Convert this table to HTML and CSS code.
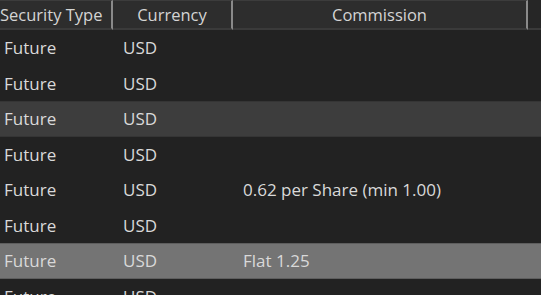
FILE: index.html
```html
<!DOCTYPE html>
<html>
<head>
<meta charset="utf-8">
<link rel="stylesheet" href="styles.css">
</head>
<body>
<div class="grid">
  <div class="header">
    <div class="hcell c1">Security Type</div>
    <div class="hcell c2">Currency</div>
    <div class="hcell c3">Commission</div>
    <div class="hfill"></div>
  </div>
  <div class="row"><div class="cell c1">Future</div><div class="cell c2">USD</div><div class="cell c3"></div></div>
  <div class="row"><div class="cell c1">Future</div><div class="cell c2">USD</div><div class="cell c3"></div></div>
  <div class="row hover"><div class="cell c1">Future</div><div class="cell c2">USD</div><div class="cell c3"></div></div>
  <div class="row"><div class="cell c1">Future</div><div class="cell c2">USD</div><div class="cell c3"></div></div>
  <div class="row"><div class="cell c1">Future</div><div class="cell c2">USD</div><div class="cell c3">0.62 per Share (min 1.00)</div></div>
  <div class="row"><div class="cell c1">Future</div><div class="cell c2">USD</div><div class="cell c3"></div></div>
  <div class="row selected"><div class="cell c1">Future</div><div class="cell c2">USD</div><div class="cell c3">Flat 1.25</div></div>
  <div class="row"><div class="cell c1">Future</div><div class="cell c2">USD</div><div class="cell c3"></div></div>
</div>
</body>
</html>
```

FILE: styles.css
```css
html, body {
  margin: 0;
  padding: 0;
  background: #222222;
  overflow: hidden;
}
.grid {
  font-family: "Open Sans", "Noto Sans", sans-serif;
  font-size: 17px;
  color: #d9d9d9;
  width: 541px;
}
.header {
  display: grid;
  grid-template-columns: 113px 120px 295px 1fr;
  height: 30px;
  background: #262626;
}
.hcell {
  background: #2d2d2d;
  border-top: 1px solid #3c3c3c;
  border-bottom: 2px solid #3a3a3a;
  border-right: 2px solid #8a8a8a;
  display: flex;
  align-items: center;
  justify-content: center;
  color: #d4d4d4;
  font-size: 16.5px;
  white-space: nowrap;
  box-sizing: border-box;
  padding-bottom: 1px;
  overflow: hidden;
}
.hcell.c1 {
  justify-content: flex-start;
  padding-left: 0;
}
.hfill {
  border-bottom: 2px solid #3a3a3a;
}
.row {
  display: grid;
  grid-template-columns: 113px 120px 1fr;
  height: 35.5px;
  align-items: center;
  box-sizing: border-box;
}
.cell {
  white-space: nowrap;
}
.cell.c1 { padding-left: 4px; }
.cell.c2 { padding-left: 10px; }
.cell.c3 { padding-left: 10px; }
.row.hover {
  background: #3d3d3d;
  border-top: 1px solid #353535;
  border-bottom: 1px solid #353535;
}
.row.selected {
  background: #747474;
  border-top: 1px solid #5e5e5e;
  border-bottom: 1px solid #5e5e5e;
}
```
